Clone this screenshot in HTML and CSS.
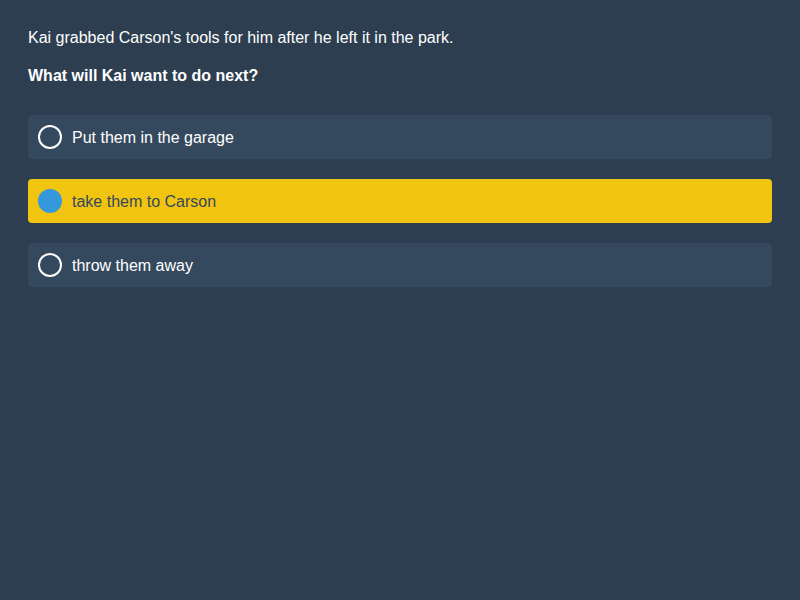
FILE: index.html
```html
<!DOCTYPE html>
<html>
<head>
<meta charset="utf-8">
<link rel="stylesheet" href="styles.css">
</head>
<body>
<div class="quiz">
  <p class="context">Kai grabbed Carson's tools for him after he left it in the park.</p>
  <p class="question">What will Kai want to do next?</p>
  <div class="options">
    <div class="option"><span class="radio"></span><span class="label">Put them in the garage</span></div>
    <div class="option selected"><span class="radio"></span><span class="label">take them to Carson</span></div>
    <div class="option"><span class="radio"></span><span class="label">throw them away</span></div>
  </div>
</div>
</body>
</html>
```
FILE: styles.css
```css
html, body {
  margin: 0;
  padding: 0;
  background: #2c3e50;
  height: 100%;
}
body {
  font-family: "Liberation Sans", Arial, sans-serif;
  font-size: 16px;
  color: #ffffff;
}
.quiz {
  padding: 28px;
}
.context {
  margin: 0;
  line-height: 20px;
}
.question {
  margin: 18px 0 0;
  line-height: 20px;
  font-weight: bold;
}
.options {
  margin-top: 29px;
  display: flex;
  flex-direction: column;
  gap: 20px;
}
.option {
  height: 44px;
  box-sizing: border-box;
  background: #34495e;
  border-radius: 4px;
  display: flex;
  align-items: center;
  padding-left: 10px;
  gap: 10px;
}
.label {
  padding-top: 2px;
}
.radio {
  width: 24px;
  height: 24px;
  box-sizing: border-box;
  border: 2px solid #ffffff;
  border-radius: 50%;
  flex: none;
}
.option.selected {
  background: #f1c40f;
  color: #34495e;
}
.option.selected .radio {
  border: none;
  background: #3498db;
}
```
